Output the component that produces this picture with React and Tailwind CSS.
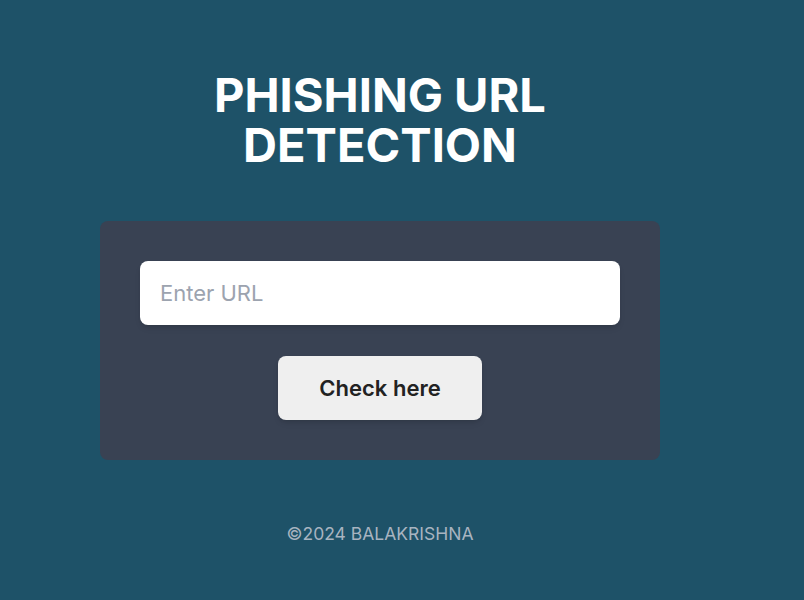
import React from "react";

export default function App() {
  return (
    <div
      className="min-h-[600px] w-full bg-[#1e5268]"
      style={{ fontFamily: "Inter, 'Liberation Sans', sans-serif" }}
    >
      <div className="ml-[100px] flex w-[560px] flex-col items-center pt-[70px]">
        <h1 className="text-center text-[47px] font-bold leading-[50px] text-white">
          PHISHING URL DETECTION
        </h1>

        <div className="mt-[51px] flex w-full flex-col items-center rounded-lg bg-[#394253] p-10">
          <input
            type="text"
            placeholder="Enter URL"
            className="h-16 w-full rounded-lg bg-white px-5 text-[22px] text-gray-800 shadow-md outline-none placeholder:text-[#9ca3af]"
          />
          <button className="mt-[31px] h-16 w-[204px] rounded-lg bg-[#efefef] text-[22px] font-semibold text-[#222] shadow-md">
            Check here
          </button>
        </div>

        <footer className="mt-[61px] text-[17.5px] text-[#a8b4c0]">
          ©2024 BALAKRISHNA
        </footer>
      </div>
    </div>
  );
}
